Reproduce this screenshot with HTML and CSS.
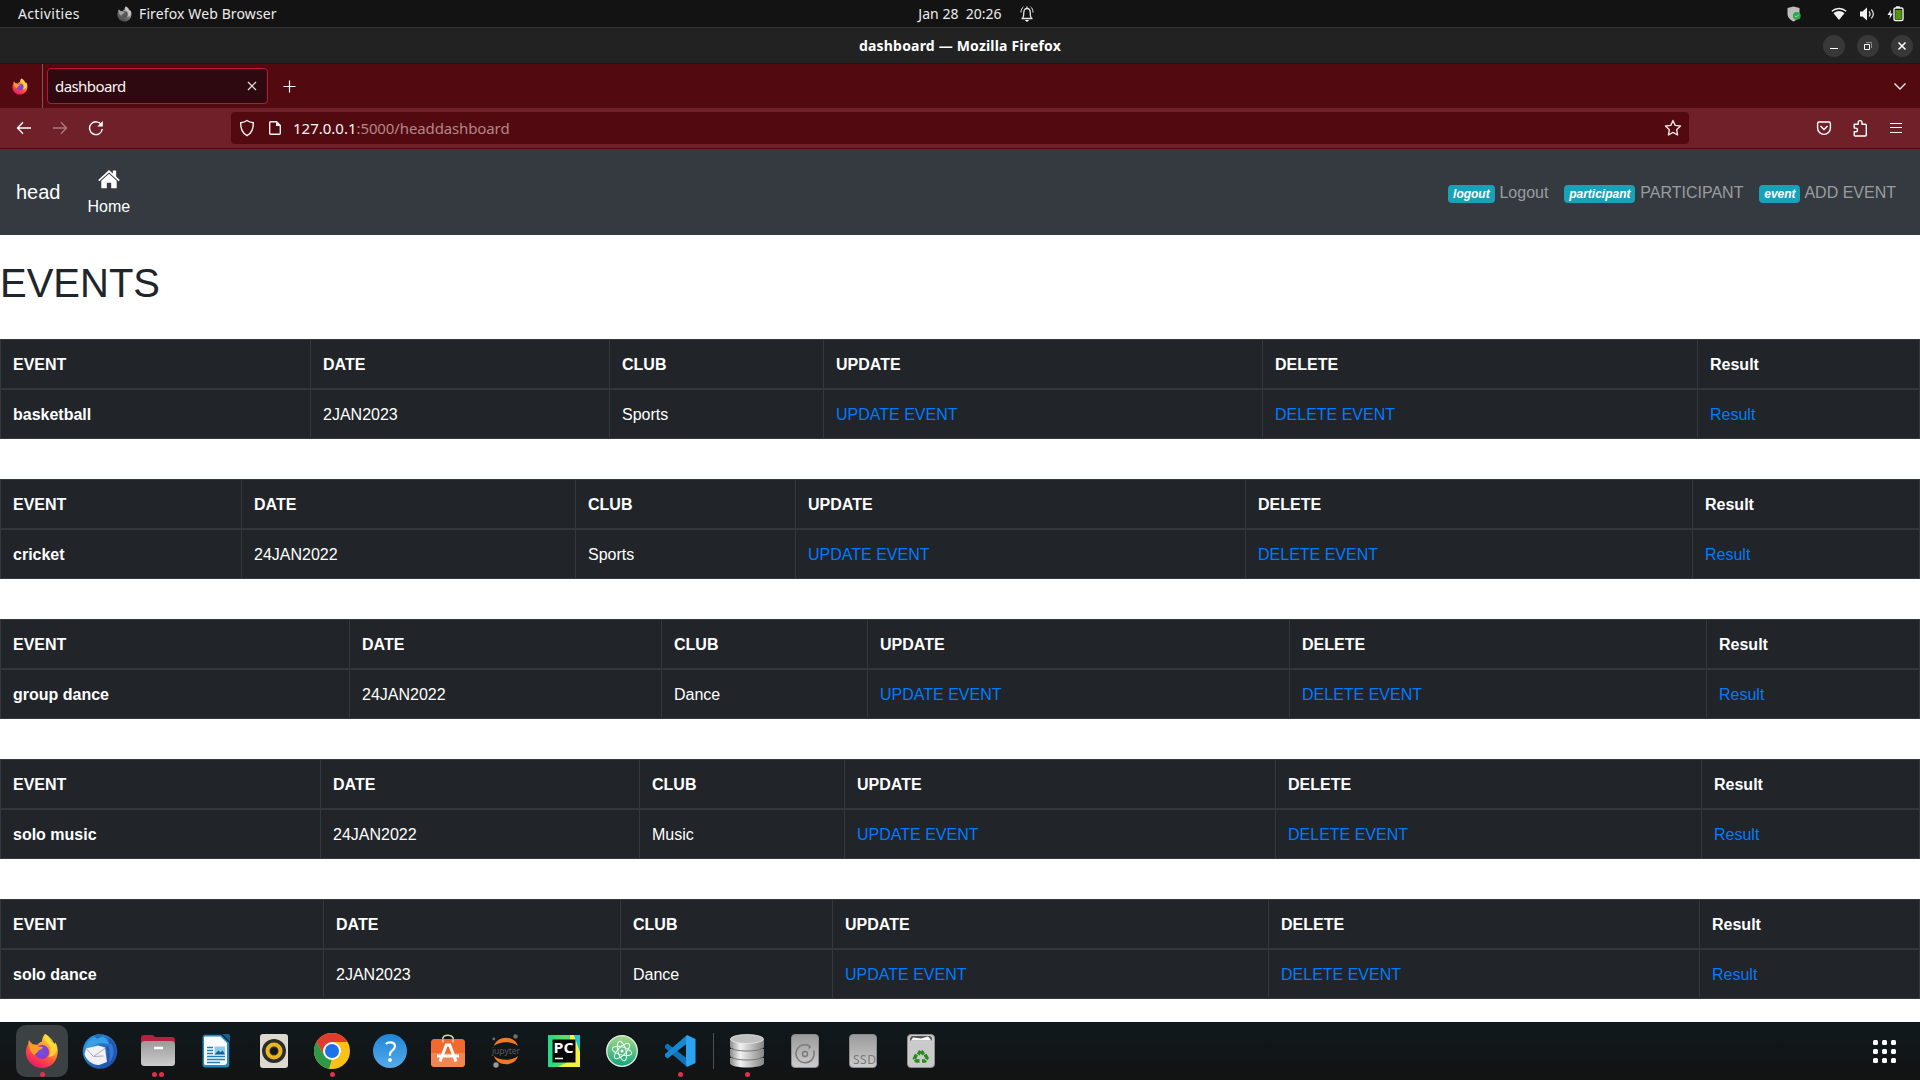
FILE: index.html
```html
<!DOCTYPE html>
<html lang="en">
<head>
<meta charset="utf-8">
<title>dashboard</title>
<link rel="stylesheet" href="styles.css">
</head>
<body>
<svg class="defs" aria-hidden="true">
  <defs>
    <linearGradient id="ff-body" x1=".85" y1="0" x2=".3" y2="1">
      <stop offset="0" stop-color="#fff04a"/><stop offset=".35" stop-color="#ffa42a"/><stop offset=".65" stop-color="#ff4f3e"/><stop offset="1" stop-color="#e8156f"/>
    </linearGradient>
    <radialGradient id="ff-globe"><stop offset="0" stop-color="#6a55e8"/><stop offset="1" stop-color="#8a3bc9"/></radialGradient>
    <symbol id="firefox" viewBox="0 0 34 36">
      <path d="M20 1c4 2.500 5.500 5.500 6 8 1.500-.5 2.500.6 3 2l1.500-1.500C32.500 13 33 16 32.700 20 31.800 29 25 35 17 35 8 35 1.300 28 1 20c-.1-4 .9-7 2.500-9.500L4 7l4 5c1-.5 2.500-.6 4 0 1-1.500 3-3 5-3.500C17 6 18 3 20 1z" fill="url(#ff-body)"/>
      <circle cx="17" cy="19" r="7" fill="url(#ff-globe)"/>
      <path d="M3.500 8c3 4 8 3.500 10 5.500 1.500.5 3 .3 4.500.5-.5 2-2.500 2.500-4.500 3.500-.5 2.500-3 2-3.500 4.500C6 21 3.500 15 3.500 8z" fill="#ff9a2a"/>
      <path d="M20 1c-1.500 5 1 8 4 11 2.500 3 2 9-1 12 5 0 9-3 9-9-1-2-2-4-3-4-.5-4-5-8-9-10z" fill="#ffe23c" opacity=".75"/>
    </symbol>
    <linearGradient id="gray" x1="0" y1="0" x2="0" y2="1"><stop offset="0" stop-color="#9a9a9a"/><stop offset="1" stop-color="#cdcdcd"/></linearGradient>
    <linearGradient id="silver" x1="0" y1="0" x2="1" y2="0"><stop offset="0" stop-color="#8b8b8b"/><stop offset=".3" stop-color="#f2f2f2"/><stop offset="1" stop-color="#858585"/></linearGradient>
    <linearGradient id="tb" x1="0" y1="0" x2="1" y2="1"><stop offset="0" stop-color="#2d9ae6"/><stop offset="1" stop-color="#1c44a0"/></linearGradient>
    <linearGradient id="help" x1="0" y1="0" x2="0" y2="1"><stop offset="0" stop-color="#1f84d6"/><stop offset="1" stop-color="#55acea"/></linearGradient>
    <linearGradient id="atom" x1="0" y1="0" x2="0" y2="1"><stop offset="0" stop-color="#a6d98a"/><stop offset="1" stop-color="#12a47c"/></linearGradient>
    <linearGradient id="pc" x1="0" y1="0" x2="1" y2="0"><stop offset="0" stop-color="#21d789"/><stop offset=".55" stop-color="#5fe05d"/><stop offset="1" stop-color="#0fc8e8"/></linearGradient>
  </defs>
</svg>

<header class="topbar">
  <div class="topbar-left">
    <span class="activities">Activities</span>
    <svg class="app-mono" viewBox="0 0 34 36"><use href="#firefox"/></svg>
    <span class="app-name">Firefox Web Browser</span>
  </div>
  <div class="clock"><span>Jan 28</span><span>20:26</span></div>
  <div class="topbar-right">
    <svg class="bell" width="14" height="18" viewBox="0 0 14 18" fill="none" stroke="#e6e6e6" stroke-width="1.300"><path d="M1.500 13.500h11M2.800 13c.8-1.500 1-3 1-5.500C3.800 5 5 3.500 7 3.500S10.200 5 10.200 7.500c0 2.500.2 4 1 5.500M7 1.500v2"/><path d="M1 7.500C1 5 1.800 3 3.500 1.800M13 7.500c0-2.500-.8-4.500-2.500-5.700" stroke-width="1"/><path d="M4.800 15h4.400L7 17z" fill="#fff" stroke="none"/></svg>
    <div class="status">
      <svg class="st-shield" width="14" height="16" viewBox="0 0 14 16"><path d="M6.500.5 12.500 2v6c0 3.500-3 6-6 7.500-3-1.500-6-4-6-7.500V2z" fill="#bdbdbd"/><circle cx="9.800" cy="9.800" r="3.900" fill="#2fa84a"/><path d="m8 9.800 1.300 1.300L11.700 8.700" fill="none" stroke="#a8e8b5"/></svg>
      <svg class="st-wifi" width="16" height="14" viewBox="0 0 16 14"><path d="M.8 4.200C5 .6 11 .6 15.200 4.200" fill="none" stroke="#f2f2f2" stroke-width="1.400"/><path d="M2.500 6.200c3.500-2.800 7.500-2.800 11 0L8 13z" fill="#f2f2f2"/></svg>
      <svg class="st-vol" width="16" height="14" viewBox="0 0 16 14"><path d="M1 4.500h2.500L8 .5v13L3.500 9.500H1z" fill="#f2f2f2"/><path d="M10 4.500c1.300 1.500 1.300 3.500 0 5M12.300 2.500c2.500 2.700 2.500 6.300 0 9" fill="none" stroke="#d8d8d8" stroke-width="1.300"/></svg>
      <svg class="st-bat" width="17" height="16" viewBox="0 0 17 16"><path d="M4 3.500.5 9H3l-.5 4L5.800 7.500H3.500z" fill="#f2f2f2"/><path d="M9 .3h4V2H9z" fill="#f2f2f2"/><rect x="7" y="2" width="9" height="12.500" rx="1.500" fill="none" stroke="#f2f2f2" stroke-width="1.400"/><path d="M8.300 4h6.400v9.200H8.300z" fill="#4e9a06"/></svg>
    </div>
  </div>
</header>

<div class="titlebar">
  <span></span>
  <h2 class="window-title">dashboard — Mozilla Firefox</h2>
  <div class="window-buttons">
    <span class="wbtn"><svg width="22" height="22"><path d="M7 13.500h8" stroke="#fff"/></svg></span>
    <span class="wbtn"><svg width="22" height="22" fill="none"><path d="M7.500 9.500h5v5h-5z" stroke="#fff"/><path d="M9 7.500h5.500V13" stroke="#8a8a8a"/></svg></span>
    <span class="wbtn"><svg width="22" height="22"><path d="m7.500 7.500 7 7m0-7-7 7" stroke="#fff" stroke-width="1.500"/></svg></span>
  </div>
</div>

<div class="tabstrip">
  <div class="pinned"><svg width="16" height="17" viewBox="0 0 34 36"><use href="#firefox"/></svg></div>
  <div class="tab"><span class="tab-label">dashboard</span><svg width="10" height="10" stroke="#e9dfe0" stroke-width="1.200"><path d="m1 1 8 8m0-8L1 9"/></svg></div>
  <svg class="new-tab" width="13" height="13" stroke="#fff" stroke-width="1.200"><path d="M6.500.5v12M.5 6.500h12"/></svg>
  <svg class="all-tabs" width="14" height="9" fill="none" stroke="#f4ecec" stroke-width="1.400"><path d="m1.500 1.500 5.500 5.500 5.500-5.500"/></svg>
</div>

<div class="toolbar">
  <svg width="16" height="16" fill="none" stroke="#fff" stroke-width="1.300"><path d="M15 8H1.500M7 2.300 1.500 8 7 13.700"/></svg>
  <svg width="16" height="16" fill="none" stroke="#ab7b80" stroke-width="1.300"><path d="M1 8h13.500M9 2.300 14.500 8 9 13.700"/></svg>
  <svg width="16" height="16" fill="none" stroke="#fff" stroke-width="1.400"><path d="M13.500 5A6.400 6.400 0 1 0 14.300 9"/><path d="M14.800 1v5.500H9.300z" fill="#fff" stroke="none"/></svg>
  <div class="urlbar">
    <svg width="16" height="18" fill="none" stroke="#fbf4f4" stroke-width="1.400"><path d="M8 1.500c2 1.500 4 2 6.300 2.200C14.500 10 13 14 8 16.700 3 14 1.500 10 1.700 3.700 4 3.500 6 3 8 1.500z"/></svg>
    <svg class="doc" width="14" height="16"><path d="M2.700 1.700h5.800l3.800 3.800v7.800c0 .6-.4 1-1 1H2.700c-.6 0-1-.4-1-1V2.700c0-.6.4-1 1-1z" fill="none" stroke="#fbf4f4" stroke-width="1.400"/><path d="M8 1.500V6h4.500z" fill="#fbf4f4"/></svg>
    <span class="url"><b>127.0.0.1</b><span>:5000/headdashboard</span></span>
    <svg class="star" width="18" height="18" fill="none" stroke="#f0e3e4" stroke-width="1.400" stroke-linejoin="round"><path d="m9 1.500 2.200 4.900 5.300.6-3.900 3.700 1 5.300L9 13.400 4.400 16l1-5.300L1.500 7l5.300-.6z"/></svg>
  </div>
  <div class="tools">
    <svg width="16" height="16" fill="none" stroke="#fff" stroke-width="1.400"><path d="M3 2h10c.8 0 1.400.6 1.400 1.400V8a6.400 6.400 0 0 1-12.800 0V3.400C1.600 2.600 2.200 2 3 2z"/><path d="M4.500 6 8 9.500 11.500 6"/></svg>
    <svg width="16" height="18" fill="none" stroke="#fff" stroke-width="1.400" stroke-linejoin="round"><path d="M2.200 5.200h4V3.500a1.900 1.900 0 0 1 3.800 0v1.700h3.300c.6 0 1 .4 1 1V16c0 .6-.4 1-1 1H3.200c-.6 0-1-.4-1-1v-3.300h1.500a1.800 1.800 0 0 0 0-3.600H2.200z"/></svg>
    <svg width="16" height="16" stroke="#fff"><path d="M2 3.500h12M2 7.500h12M2 12.500h12"/></svg>
  </div>
</div>

<main class="page">
  <nav class="navbar">
    <a class="brand">head</a>
    <a class="home"><svg width="22" height="20" viewBox="0 0 20 18" fill="#fff"><path d="M10 .8 13.500 4V1.200h3V6.800L19.800 9.800l-1 1.200L10 3 1.200 11 .2 9.800z"/><path d="m10 4.300 7 6.300V17.500h-5v-5H8v5H3v-6.900z"/></svg><span>Home</span></a>
    <div class="links">
      <a><span class="badge">logout</span> Logout</a>
      <a><span class="badge">participant</span> PARTICIPANT</a>
      <a><span class="badge">event</span> ADD EVENT</a>
    </div>
  </nav>
  <h1>EVENTS</h1>
  <div class="tables">
    <table class="events basketball">
      <thead><tr><th>EVENT</th><th>DATE</th><th>CLUB</th><th>UPDATE</th><th>DELETE</th><th>Result</th></tr></thead>
      <tbody><tr><th>basketball</th><td>2JAN2023</td><td>Sports</td><td><a>UPDATE EVENT</a></td><td><a>DELETE EVENT</a></td><td><a>Result</a></td></tr></tbody>
    </table>
    <table class="events cricket">
      <thead><tr><th>EVENT</th><th>DATE</th><th>CLUB</th><th>UPDATE</th><th>DELETE</th><th>Result</th></tr></thead>
      <tbody><tr><th>cricket</th><td>24JAN2022</td><td>Sports</td><td><a>UPDATE EVENT</a></td><td><a>DELETE EVENT</a></td><td><a>Result</a></td></tr></tbody>
    </table>
    <table class="events group-dance">
      <thead><tr><th>EVENT</th><th>DATE</th><th>CLUB</th><th>UPDATE</th><th>DELETE</th><th>Result</th></tr></thead>
      <tbody><tr><th>group dance</th><td>24JAN2022</td><td>Dance</td><td><a>UPDATE EVENT</a></td><td><a>DELETE EVENT</a></td><td><a>Result</a></td></tr></tbody>
    </table>
    <table class="events solo-music">
      <thead><tr><th>EVENT</th><th>DATE</th><th>CLUB</th><th>UPDATE</th><th>DELETE</th><th>Result</th></tr></thead>
      <tbody><tr><th>solo music</th><td>24JAN2022</td><td>Music</td><td><a>UPDATE EVENT</a></td><td><a>DELETE EVENT</a></td><td><a>Result</a></td></tr></tbody>
    </table>
    <table class="events solo-dance">
      <thead><tr><th>EVENT</th><th>DATE</th><th>CLUB</th><th>UPDATE</th><th>DELETE</th><th>Result</th></tr></thead>
      <tbody><tr><th>solo dance</th><td>2JAN2023</td><td>Dance</td><td><a>UPDATE EVENT</a></td><td><a>DELETE EVENT</a></td><td><a>Result</a></td></tr></tbody>
    </table>
  </div>
</main>

<footer class="dock">
  <div class="app active"><svg width="34" height="36" viewBox="0 0 34 36"><use href="#firefox"/></svg><span class="dots"><i></i></span></div>
  <div class="app"><svg width="36" height="36" viewBox="0 0 36 36"><circle cx="18" cy="18.500" r="17.300" fill="url(#tb)"/><path d="M3 15C5 8 11 3 18 3c5 1 9 5 9 9-6-3-14-2-20 4z" fill="#3b9fe6"/><path d="m4 15.500 12-3 7 2 2 14.500-8 3C10 32 4 27 2.500 21z" fill="#f1f1f4"/><path d="m4 15.500 7.500 8 12-8.500M11.500 23.500l10-.5" fill="none" stroke="#a9abb5"/><path d="M26 5c9 5 11 17 3 25-2 2-5 5-8 5 5-5 7-14 3-21 4-2 4-6 2-9z" fill="#2155b4"/><path d="M29 10c4 7 3 14-2 20 1-7 1-13-1-18z" fill="#3478d2"/><path d="M12.500 3.500C14.500 0 19 0 20.500 3L15 6z" fill="#1d6fbd"/></svg></div>
  <div class="app"><svg width="34" height="34" viewBox="0 0 34 34"><path d="M0 4c0-2 1-3 3-3h8c2 0 2 2 4 2h16c2 0 3 1 3 3v10H0z" fill="#b5213f"/><rect y="7" width="34" height="25" rx="3.500" fill="url(#gray)"/><path d="M13 14h9" stroke="#fff" stroke-width="2.500"/></svg><span class="dots"><i></i><i></i></span></div>
  <div class="app"><svg width="28" height="34" viewBox="0 0 28 34"><path d="M3 .7h16L27.300 9v21.500c0 2-1 3-3 3H3.500c-2 0-3-1-3-3V3.500C.5 2 1.500.7 3 .7z" fill="#2588c0"/><path d="M3.500 2.500h15L25 9v19c0 2-1 3-3 3H3.500C2.500 31 2 30 2 29V4c0-1 .5-1.500 1.500-1.500z" fill="#f8fafb"/><path d="M20 0h6c1.200 0 2 .8 2 2v6z" fill="#14608f"/><path d="M5 13.500h6M5 16.500h6M5 19.500h6M5 22.500h18M5 25.500h18M5 28.500h13" stroke="#237fb5" stroke-width="1.500"/><rect x="12.500" y="12.500" width="10.500" height="8" fill="#8fcbee"/><path d="m12.500 20.500 4-4 2 2 2-2 2.500 4z" fill="#14608f"/></svg></div>
  <div class="app"><svg width="28" height="34" viewBox="0 0 28 34"><rect width="28" height="34" rx="3" fill="#ded9cf"/><circle cx="14" cy="17" r="12" fill="#2c2c2c"/><circle cx="14" cy="17" r="6.500" fill="#2c2c2c" stroke="#eab81c" stroke-width="4"/><circle cx="14" cy="17" r="3.300" fill="#171717"/></svg></div>
  <div class="app"><svg width="36" height="36" viewBox="0 0 36 36"><circle cx="18" cy="18" r="18" fill="#fbc116"/><path d="M2.400 9A18 18 0 0 1 33.600 9H18L10.200 22.500z" fill="#e13b2d"/><path d="M2.400 9 10.200 22.500 18 27l-1.500 8.900A18 18 0 0 1 2.400 9z" fill="#2b9a48"/><path d="m25.800 22.500-8.300 13.500-2.500-.3L18 26z" fill="#fbc116"/><circle cx="18" cy="18" r="9" fill="#fff"/><circle cx="18" cy="18" r="7" fill="#1a73e8"/></svg><span class="dots"><i></i></span></div>
  <div class="app"><svg width="34" height="34" viewBox="0 0 34 34"><circle cx="17" cy="17" r="17" fill="url(#help)"/><path d="M12.800 10c1-1.200 2.600-1.700 4.400-1.700 3 0 4.800 1.600 4.800 4 0 4-5 4.200-5 8v1.500" fill="none" stroke="#fff" stroke-width="2.200"/><circle cx="17" cy="26" r="1.900" fill="#fff"/></svg></div>
  <div class="app"><svg class="store" width="34" height="34" viewBox="0 0 34 34"><path d="M11.500 6.500C11.500 1.800 14 1.200 17 1.200s5.500.6 5.500 5.300" fill="none" stroke="#e7d4a8" stroke-width="1.500"/><rect y="5" width="34" height="28" rx="3.500" fill="#f1692f"/><path d="M0 19h34v10.500c0 2-1.500 3.500-3.500 3.500h-27C1.500 33 0 31.500 0 29.500z" fill="#f28552"/><path d="M12 5.500v3M22 5.500v3" stroke="#e7d4a8" stroke-width="1.500"/><path d="m9 27.500 6.300-16.500h3.400L25 27.500M6 22h22" fill="none" stroke="#fff" stroke-width="3"/></svg></div>
  <div class="app"><svg width="30" height="36" viewBox="0 0 30 36"><path d="M3 13C6 2 24 2 27 13 21 8 9 8 3 13zM3 23c3 11 21 11 24 0-6 5-18 5-24 0z" fill="#f37726"/><circle cx="24.500" cy="3.500" r="2.200" fill="#6f6f70"/><circle cx="2.800" cy="6" r="1.400" fill="#6f6f70"/><circle cx="5" cy="32" r="2.700" fill="#999"/><text x="15" y="20.500" text-anchor="middle" class="jupyter">jupyter</text></svg></div>
  <div class="app"><svg width="32" height="32" viewBox="0 0 32 32"><path d="M0 0h32v32H0z" fill="url(#pc)"/><path d="M22 0h4l6 17v15H10l12-6z" fill="#f6f03e"/><path d="M26 0h6v16z" fill="#18c9d8"/><path d="M4.500 4.500h23v23h-23z" fill="#080808"/><path d="M7 23.500h8" stroke="#fff" stroke-width="1.500"/><text x="5.500" y="17.800" textLength="20" lengthAdjust="spacingAndGlyphs" class="pycharm">PC</text></svg></div>
  <div class="app"><svg width="32" height="32" viewBox="0 0 32 32"><circle cx="16" cy="16" r="15.300" fill="url(#atom)" stroke="#e4efe6" stroke-width="1.300"/><g fill="none" stroke="#f2fff4"><ellipse cx="16" cy="16" rx="10" ry="4" transform="rotate(15 16 16)"/><ellipse cx="16" cy="16" rx="10" ry="4" transform="rotate(75 16 16)"/><ellipse cx="16" cy="16" rx="10" ry="4" transform="rotate(-45 16 16)"/></g><circle cx="16" cy="16" r="1.600" fill="#fff"/></svg></div>
  <div class="app"><svg width="32" height="32" viewBox="0 0 32 32"><path d="m1 10.500 2.500-2 19.500 15V32L1 13z" fill="#1272b8"/><path d="m1 21.500 2.500 2L23 8.500V0L1 19z" fill="#1688d0"/><path d="M23 0 31.500 4v24L23 32l-1-3V3z" fill="#2ba3ef"/></svg><span class="dots"><i></i></span></div>
  <span class="dock-sep"></span>
  <div class="app"><svg width="34" height="34" viewBox="0 0 34 34"><g fill="url(#silver)"><path d="M0 24v5c0 6 34 6 34 0v-5z"/><path d="M0 15v6c0 6 34 6 34 0v-6z"/><path d="M0 5v7c0 6 34 6 34 0V5z"/></g><path d="M0 12.500c0 6 34 6 34 0M0 21.500c0 6 34 6 34 0" fill="none" stroke="#777"/><ellipse cx="17" cy="5" rx="16.500" ry="4.500" fill="#c0c0c0" stroke="#eee" stroke-width=".7"/></svg><span class="dots"><i></i></span></div>
  <div class="app"><svg width="28" height="34" viewBox="0 0 28 34"><rect x=".5" y=".5" width="27" height="33" rx="3.500" fill="url(#gray)" stroke="#8b8b8b"/><path d="M19.500 12.500A9 9 0 1 0 22.800 17.500M19.500 12.500l-2 2M23 20v-3.500" fill="none" stroke="#7b7b7b" stroke-width="1.500"/><circle cx="14" cy="20" r="2.500" fill="none" stroke="#7b7b7b" stroke-width="1.500"/></svg></div>
  <div class="app"><svg width="28" height="34" viewBox="0 0 28 34"><rect x=".5" y=".5" width="27" height="33" rx="3.500" fill="url(#gray)" stroke="#8b8b8b"/><text x="4" y="30" textLength="23" class="ssd">SSD</text></svg></div>
  <div class="app"><svg width="28" height="34" viewBox="0 0 28 34"><rect x=".5" y=".5" width="27" height="33" rx="3.500" fill="#cacaca" stroke="#8f8f8f"/><path d="M3 6.500C3 3 4 2 6 2h16c2 0 3 1 3 4.500z" fill="#555"/><path d="m4 6.500 2-3 8 1 7-2 3.500 4z" fill="#fff"/><g fill="none" stroke="#2b8a1d" stroke-width="3.400"><path d="m11.200 20.500 2.700-4.200 2.700 4.200" stroke-dasharray="4.300 1.400"/><path d="m18 20.500 2 3.500-2 3h-3" stroke-dasharray="5.500 1.200"/><path d="m12.500 27h-3l-2-2.500 2-4" stroke-dasharray="5 1"/></g></svg></div>
  <div class="app-grid"><i></i><i></i><i></i><i></i><i></i><i></i><i></i><i></i><i></i></div>
</footer>
</body>
</html>
```
FILE: styles.css
```css
* { box-sizing: border-box; }
html, body { margin: 0; height: 100%; }
body {
  display: flex;
  flex-direction: column;
  height: 1080px;
  overflow: hidden;
  background: #fff;
  font-family: "Liberation Sans", Arial, sans-serif;
}
svg { display: block; flex: none; }
.defs { position: absolute; width: 0; height: 0; }

/* Desktop top bar */
.topbar, .titlebar, .tabstrip, .toolbar { font-family: "Noto Sans", "Open Sans", sans-serif; flex: none; }
.topbar {
  display: grid;
  grid-template-columns: 1fr auto 1fr;
  align-items: center;
  height: 27px;
  background: #131313;
  color: #ececec;
  font-size: 14px;
  line-height: 26px;
}
.topbar-left, .topbar-right, .status { display: flex; align-items: center; }
.topbar-left { padding-left: 18px; }
.activities { width: 99px; letter-spacing: 0.35px; }
.app-mono { width: 15px; height: 16px; filter: grayscale(1) brightness(.95); }
.app-name { margin-left: 7px; letter-spacing: 0.12px; white-space: nowrap; }
.clock { display: flex; gap: 7px; letter-spacing: 0.05px; }
.bell { margin-left: 18px; }
.status { margin-left: auto; padding-right: 16px; }
.st-wifi { margin-left: 30px; }
.st-vol { margin-left: 12px; }
.st-bat { margin-left: 12px; }

/* Window title */
.titlebar {
  display: grid;
  grid-template-columns: 1fr auto 1fr;
  align-items: center;
  height: 37px;
  border-top: 1px solid #343434;
  border-bottom: 1px solid #181818;
  background: #222;
}
.window-title { margin: 0; font-size: 14px; font-weight: 700; letter-spacing: 0.19px; color: #fff; }
.window-buttons { display: flex; justify-content: flex-end; gap: 12px; padding-right: 7px; }
.wbtn { width: 22px; height: 22px; border-radius: 50%; background: #383838; }

/* Tabs */
.tabstrip { display: flex; align-items: center; height: 44px; background: #520a10; }
.pinned {
  display: flex;
  align-items: center;
  width: 43px;
  height: 44px;
  padding-left: 12px;
  border-right: 1px solid #86525a;
}
.tab {
  display: flex;
  align-items: center;
  justify-content: space-between;
  width: 221px;
  height: 36px;
  margin-left: 4px;
  padding: 0 10px 0 7px;
  border: 1px solid #c01530;
  border-radius: 4px;
  background: #2e0a10;
  color: #fbf4f4;
  font-size: 15px;
}
.tab-label { letter-spacing: -0.58px; }
.new-tab { margin-left: 15px; }
.all-tabs { margin-left: auto; margin-right: 13px; }

/* Navigation toolbar */
.toolbar {
  display: flex;
  align-items: center;
  gap: 20px;
  height: 41px;
  padding: 0 16px;
  border-bottom: 1px solid #520a10;
  background: #6f2028;
}
.urlbar {
  display: flex;
  align-items: center;
  width: 1458px;
  height: 32px;
  margin-left: 107px;
  padding: 0 7px 0 8px;
  border-radius: 4px;
  background: #520a10;
}
.doc { margin-left: 13px; }
.url { margin-left: 11px; font-size: 15px; letter-spacing: -0.12px; color: #b2868b; white-space: nowrap; }
.url b { font-weight: 400; letter-spacing: 0; color: #fbf4f4; }
.star { margin-left: auto; }
.tools { display: flex; align-items: center; gap: 20px; margin-left: auto; }

/* Site */
.page { flex: 1; min-height: 0; overflow: hidden; color: #212529; font-size: 16px; line-height: 24px; }
.navbar { display: flex; align-items: center; height: 86px; padding: 0 16px; background: #343a40; color: #fff; }
.brand { font-size: 20px; line-height: 30px; }
.home { display: flex; flex-direction: column; align-items: center; margin-left: 27px; }
.home svg { margin-top: 4px; }
.home span { margin-top: 6px; }
.links { display: flex; margin-left: auto; color: rgba(255, 255, 255, .5); }
.links a { padding: 9px 8px 7px; }
.badge {
  display: inline-block;
  margin-right: 0.500px;
  padding: 3px 4.800px;
  border-radius: 4px;
  background: #17a2b8;
  color: #fff;
  font-size: 12px;
  font-weight: 700;
  font-style: italic;
  line-height: 12px;
  vertical-align: baseline;
}
h1 { margin: 24px 0 32px; font-size: 40px; font-weight: 400; line-height: 48px; }
.tables { display: flex; flex-direction: column; gap: 40px; }
.events {
  display: block;
  border: solid #32383e;
  border-width: 1px 0 0 1px;
  background: #212529;
  color: #fff;
}
.events thead, .events tbody { display: block; }
.events tr { display: grid; }
.events th, .events td {
  padding: 13px 12px 11px;
  border: solid #32383e;
  border-width: 0 1px 1px 0;
  text-align: left;
}
.events thead th { border-bottom-width: 2px; }
.events a { color: #007bff; }
.basketball tr { grid-template-columns: 310px 299px 214px 439px 435px 1fr; }
.cricket tr { grid-template-columns: 241px 334px 220px 450px 447px 1fr; }
.group-dance tr { grid-template-columns: 349px 312px 206px 422px 417px 1fr; }
.solo-music tr { grid-template-columns: 320px 319px 205px 431px 426px 1fr; }
.solo-dance tr { grid-template-columns: 323px 297px 212px 436px 431px 1fr; }

/* Dock */
.dock {
  display: flex;
  align-items: center;
  flex: none;
  height: 58px;
  padding: 0 24px 0 13px;
  background: linear-gradient(#10191d, #121313);
}
.app { position: relative; display: grid; place-items: center; width: 52px; height: 52px; margin: 0 3px; border-radius: 10px; }
.active { background: #3c4244; }
.dots { position: absolute; left: 0; right: 0; bottom: 0; display: flex; justify-content: center; gap: 2px; }
.dots i { width: 5px; height: 5px; border-radius: 50%; background: #e0304f; }
.dock-sep { width: 1px; height: 36px; margin: 0 4px; background: #4b5153; }
.jupyter { font: 8.500px "Noto Sans", sans-serif; fill: #5a5a5c; }
.pycharm { font: 700 15px "Open Sans", sans-serif; fill: #fff; }
.ssd { font: 12px "Noto Sans", sans-serif; fill: #7b7b7b; }
.app-grid { display: grid; grid-template-columns: repeat(3, 5px); gap: 4px; margin-left: auto; }
.app-grid i { height: 5px; border-radius: 1.500px; background: #fff; }
```
